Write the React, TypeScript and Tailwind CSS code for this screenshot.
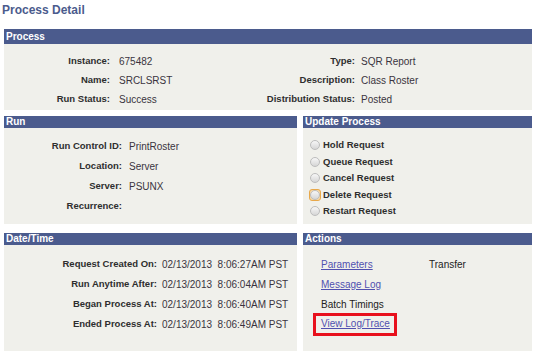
const HEAD = 'bg-[#4b5b8d] text-white font-bold text-[10px] pl-[2px]'
const BODY = 'bg-[#f0f0eb]'

function Header({ title, tall }: { title: string; tall?: boolean }) {
  return (
    <div className={`${HEAD} ${tall ? 'h-[15px] leading-[15px]' : 'h-[12px] leading-[12px]'}`}>{title}</div>
  )
}

function Field({ label, value, w, h = 'h-5', gap = 'pl-[7px]' }: { label: string; value?: string; w: string; h?: string; gap?: string }) {
  return (
    <div className={`flex items-center ${h}`}>
      <span className={`${w} shrink-0 text-right font-bold text-[9.5px] text-[#2e2e2e]`}>{label}</span>
      <span className={`${gap} whitespace-pre text-[10px] text-[#3a3440]`}>{value}</span>
    </div>
  )
}

function Radio({ label, focused }: { label: string; focused?: boolean }) {
  return (
    <div className="flex items-center h-[16.5px] pl-[7px]">
      <span
        className={`flex items-center justify-center w-[12px] h-[12px] -ml-[1px] rounded-[3px] ${
          focused ? 'border border-[#e8a84a] bg-[#f7d9a8]' : ''
        }`}
      >
        <span className="w-[10px] h-[10px] rounded-full border border-[#bdbdbd] bg-linear-to-b from-[#f7f7f7] to-[#d6d6d6]" />
      </span>
      <span className="pl-[2px] font-bold text-[9.5px] text-[#2e2e2e]">{label}</span>
    </div>
  )
}

function Link({ children }: { children: string }) {
  return <span className="text-[10px] text-[#5050b0] underline underline-offset-1">{children}</span>
}

export default function App() {
  return (
    <div className="w-[540px] h-[355px] bg-white pl-1 relative font-['Liberation_Sans',Arial,sans-serif]">
      <div className="h-[29px] pt-[1px] -ml-[2px] text-[12px] font-bold text-[#4b5b8d]">Process Detail</div>

      <div className="w-[528px]">
        <Header title="Process" tall />
        <div className={`${BODY} h-[66px] pt-[8px] flex`}>
          <div className="w-[235px]">
            <Field label="Instance:" value="675482" w="w-[106px]" h="h-[19px]" gap="pl-[9px]" />
            <Field label="Name:" value="SRCLSRST" w="w-[106px]" h="h-[19px]" gap="pl-[9px]" />
            <Field label="Run Status:" value="Success" w="w-[106px]" h="h-[19px]" gap="pl-[9px]" />
          </div>
          <div>
            <Field label="Type:" value="SQR Report" w="w-[116px]" h="h-[19px]" gap="pl-[6px]" />
            <Field label="Description:" value="Class Roster" w="w-[116px]" h="h-[19px]" gap="pl-[6px]" />
            <Field label="Distribution Status:" value="Posted" w="w-[116px]" h="h-[19px]" gap="pl-[6px]" />
          </div>
        </div>
      </div>

      <div className="mt-[6px] w-[528px] grid grid-cols-[293px_229px] gap-x-[6px] gap-y-[9px]">
        <div>
          <Header title="Run" />
          <div className={`${BODY} h-[96px] pt-[8px]`}>
            <Field label="Run Control ID:" value="PrintRoster" w="w-[118px]" />
            <Field label="Location:" value="Server" w="w-[118px]" />
            <Field label="Server:" value="PSUNX" w="w-[118px]" />
            <Field label="Recurrence:" w="w-[118px]" />
          </div>
        </div>
        <div>
          <Header title="Update Process" />
          <div className={`${BODY} h-[96px] pt-[9px]`}>
            <Radio label="Hold Request" />
            <Radio label="Queue Request" />
            <Radio label="Cancel Request" />
            <Radio label="Delete Request" focused />
            <Radio label="Restart Request" />
          </div>
        </div>

        <div>
          <Header title="Date/Time" />
          <div className={`${BODY} h-[106px] pt-[9px]`}>
            <Field label="Request Created On:" value="02/13/2013  8:06:27AM PST" w="w-[153px]" gap="pl-[5px]" />
            <Field label="Run Anytime After:" value="02/13/2013  8:06:04AM PST" w="w-[153px]" gap="pl-[5px]" />
            <Field label="Began Process At:" value="02/13/2013  8:06:40AM PST" w="w-[153px]" gap="pl-[5px]" />
            <Field label="Ended Process At:" value="02/13/2013  8:06:49AM PST" w="w-[153px]" gap="pl-[5px]" />
          </div>
        </div>
        <div>
          <Header title="Actions" />
          <div className={`${BODY} h-[106px] pt-[9px] pl-[18px] text-[10px] text-[#222]`}>
            <div className="flex items-center h-5">
              <span className="w-[108px]"><Link>Parameters</Link></span>
              <span>Transfer</span>
            </div>
            <div className="flex items-center h-5"><Link>Message Log</Link></div>
            <div className="flex items-center h-5">Batch Timings</div>
            <div className="flex items-center h-5">
              <span className="relative inline-block leading-5">
                <Link>View Log/Trace</Link>
                <span className="absolute -left-[8px] -right-[7px] -top-[1px] -bottom-[2px] border-[3px] border-[#e8101c]" />
              </span>
            </div>
          </div>
        </div>
      </div>
    </div>
  )
}
